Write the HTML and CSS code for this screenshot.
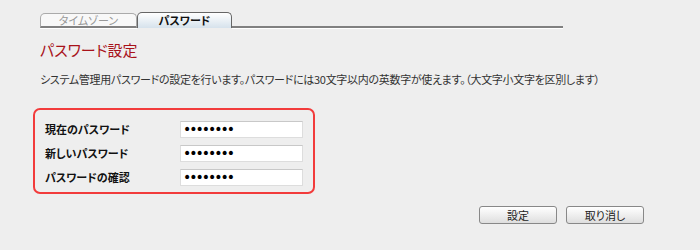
FILE: index.html
```html
<!DOCTYPE html>
<html lang="ja">
<head>
  <meta charset="UTF-8" />
  <title>パスワード設定</title>
  <link rel="stylesheet" href="styles.css">
</head>
<body>
  <div class="page">
    <div class="tabs">
      <div class="tab">タイムゾーン</div>
      <div class="tab active">パスワード</div>
      <div class="tab-line"></div>
    </div>

    <h1 class="title">パスワード設定</h1>
    <p class="desc">システム管理用パスワードの設定を行います。パスワードには30文字以内の英数字が使えます。（大文字小文字を区別します）</p>

    <div class="form-box">
      <div class="form-row">
        <label class="label">現在のパスワード</label>
        <input class="field" type="password" value="12345678" />
      </div>
      <div class="form-row">
        <label class="label">新しいパスワード</label>
        <input class="field" type="password" value="12345678" />
      </div>
      <div class="form-row">
        <label class="label">パスワードの確認</label>
        <input class="field" type="password" value="12345678" />
      </div>
    </div>

    <div class="actions">
      <button class="btn">設定</button>
      <button class="btn">取り消し</button>
    </div>
  </div>
</body>
</html>
```

FILE: styles.css
```css
body {
  margin: 0;
  background-color: #eeeeee;
  color: #222;
  font-family: "Noto Sans CJK JP", "Noto Sans", sans-serif;
  font-size: 11px;
  font-feature-settings: "palt";
}

.page {
  width: 700px;
  height: 250px;
  padding: 12px 56px 0 40px;
  box-sizing: border-box;
}

/* tab strip */
.tabs {
  display: flex;
  align-items: flex-end;
  width: 523px;
  height: 16px;
}

.tab {
  width: 95px;
  height: 12px;
  line-height: 12px;
  text-align: center;
  color: #999;
  background: #f8f8f8;
  border: 1px solid #aaa;
  border-bottom: 2px solid #808080;
  border-radius: 5px 5px 0 0;
  box-shadow: 0 1px 0 #fff;
}

.tab.active {
  width: 93px;
  height: 15px;
  line-height: 15px;
  color: #111;
  font-weight: bold;
  border-color: #666;
  border-bottom: none;
  box-shadow: none;
  background: linear-gradient(#ffffff, #d6e2ec);
}

.tab-line {
  flex: 1;
  border-bottom: 2px solid #808080;
  box-shadow: 0 1px 0 #fff;
}

.title {
  margin: 12px 0 0;
  font-size: 15px;
  font-weight: normal;
  color: #a8121a;
  line-height: 20px;
}

.desc {
  margin: 11px 0 0;
  line-height: 16px;
  color: #333;
  letter-spacing: -0.3px;
}

/* form */
.form-box {
  width: 258px;
  margin: 21px 0 0 -7px;
  padding: 7px 10px 3px 10px;
  border: 2px solid #f23b3b;
  border-radius: 7px;
}

.form-row {
  display: flex;
  align-items: center;
  height: 24px;
}

.label {
  width: 135px;
  font-weight: bold;
  color: #111;
}

.field {
  width: 123px;
  height: 17px;
  padding: 0 2px;
  box-sizing: border-box;
  border: 1px solid #ddd;
  border-top-color: #c8c8c8;
  background: #fff;
  color: #000;
  font-family: "DejaVu Sans", sans-serif;
  font-size: 14px;
  letter-spacing: -2px;
  outline: none;
}

.actions {
  display: flex;
  justify-content: flex-end;
  gap: 9px;
  margin-top: 12px;
}

.btn {
  width: 78px;
  height: 18px;
  padding: 0;
  font-family: inherit;
  font-size: 11px;
  font-feature-settings: "palt";
  color: #222;
  border: 1px solid #888;
  border-radius: 3px;
  background: linear-gradient(#ffffff, #dedede);
}
```
